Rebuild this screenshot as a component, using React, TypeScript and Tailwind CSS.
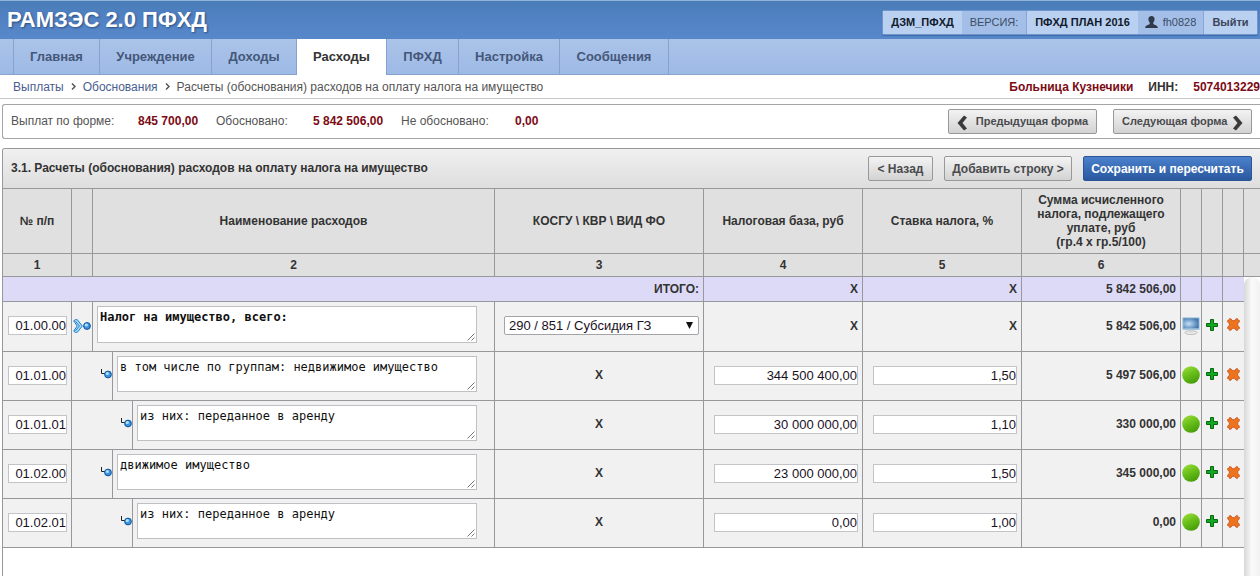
import React from "react";

const NAV = [
  { label: "Главная", width: "w-[86px]" },
  { label: "Учреждение", width: "w-[112px]" },
  { label: "Доходы", width: "w-[85px]" },
  { label: "Расходы", width: "w-[90px]", active: true },
  { label: "ПФХД", width: "w-[72px]" },
  { label: "Настройка", width: "w-[101px]" },
  { label: "Сообщения", width: "w-[109px]" },
];

type Row = {
  code: string;
  level: 0 | 1 | 2;
  name: string;
  base?: string;
  rate?: string;
  sum: string;
};

const ROWS: Row[] = [
  { code: "01.00.00", level: 0, name: "Налог на имущество, всего:", sum: "5 842 506,00" },
  { code: "01.01.00", level: 1, name: "в том числе по группам: недвижимое имущество", base: "344 500 400,00", rate: "1,50", sum: "5 497 506,00" },
  { code: "01.01.01", level: 2, name: "из них: переданное в аренду", base: "30 000 000,00", rate: "1,10", sum: "330 000,00" },
  { code: "01.02.00", level: 1, name: "движимое имущество", base: "23 000 000,00", rate: "1,50", sum: "345 000,00" },
  { code: "01.02.01", level: 2, name: "из них: переданное в аренду", base: "0,00", rate: "1,00", sum: "0,00" },
];

const LINE = "border-r border-b border-[#98989c]";
const CELL = "border-r border-b border-[#98989c] pb-[2px]";
const FIELD = "block h-[19px] w-full border border-[#c4c4c8] bg-white text-right text-[13px] leading-[17px] font-normal text-[#1a1024] outline-none";
const GREY_BUTTON =
  "flex h-[25px] items-center rounded-[2px] border border-[#98989a] bg-linear-to-b from-[#f3f3f3] to-[#d3d3d3] font-bold whitespace-nowrap text-[#4a4a4e]";

function Chevron() {
  return (
    <svg width="5" height="7" viewBox="0 0 5 7" aria-hidden="true">
      <path d="M1 0.5 4 3.5 1 6.5" fill="none" stroke="#555" strokeWidth="1.5" />
    </svg>
  );
}

function Arrow({ right }: { right?: boolean }) {
  return (
    <svg width="11" height="16" viewBox="0 0 11 16" className="mt-[2px]" aria-hidden="true">
      {right ? (
        <path d="M1 2.5 4 0.5 10.5 8 4 15.5 1 13.5 5.500 8Z" fill="#3a3a3c" />
      ) : (
        <path d="M10 2.500 7 0.5 0.5 8 7 15.5 10 13.500 5.500 8Z" fill="#3a3a3c" />
      )}
    </svg>
  );
}

function UserIcon() {
  return (
    <svg width="13" height="12" viewBox="0 0 13 12" aria-hidden="true">
      <path d="M6.5 0C8.600 0 9.700 1.300 9.600 3.200 9.500 4.900 8.800 5.900 8.300 6.600V8C9.500 9 12.700 9 12.900 12H.1C.3 9 3.500 9 4.700 8V6.600C4.200 5.900 3.500 4.900 3.400 3.200 3.300 1.300 4.400 0 6.500 0Z" fill="#303a4a" />
    </svg>
  );
}

function ExpandIcon() {
  return (
    <svg width="18" height="14" viewBox="0 0 18 14" className="block shrink-0" aria-hidden="true">
      <path d="M.700 1.800 2.300.700H4.300L9.300 7 4.300 13.300H2.300L.700 12.200 4.200 7Z" fill="#a9dcf8" stroke="#1d7cc8" />
      <path d="M2.500 2.300 6.500 7 2.500 11.700" fill="none" stroke="#2a88d0" />
      <circle cx="14" cy="7" r="3.400" fill="#3b95dc" stroke="#0f559f" />
      <circle cx="13.300" cy="6" r="1.600" fill="#b6e0fa" />
    </svg>
  );
}

function BranchIcon() {
  return (
    <svg width="12" height="11" viewBox="0 0 12 11" className="block" aria-hidden="true">
      <path d="M1.500 1V5.500H5" fill="none" stroke="#222" />
      <circle cx="8" cy="6.500" r="3.400" fill="#3b95dc" stroke="#0f559f" />
      <circle cx="7.300" cy="5.500" r="1.600" fill="#b6e0fa" />
    </svg>
  );
}

function MonitorIcon() {
  return (
    <svg width="18" height="18" viewBox="0 0 18 18" aria-hidden="true">
      <defs>
        <radialGradient id="screen" cx=".35" cy=".55" r=".65">
          <stop offset="0" stopColor="#c4e0f4" />
          <stop offset="1" stopColor="#4379b0" />
        </radialGradient>
      </defs>
      <rect x=".3" y=".3" width="17.400" height="12.700" rx="1" fill="#a9c6de" />
      <rect x="1.300" y="1.300" width="15.400" height="10" fill="url(#screen)" />
      <ellipse cx="9" cy="15.600" rx="6" ry="1.900" fill="#eee" stroke="#b4b4b4" strokeWidth=".9" />
      <path d="M6.500 13H11.500V15.500H6.500Z" fill="#d4d4d4" />
    </svg>
  );
}

function BallIcon() {
  return (
    <svg width="18" height="18" viewBox="0 0 18 18" aria-hidden="true">
      <defs>
        <linearGradient id="ball" x1=".2" y1="0" x2=".7" y2="1">
          <stop offset="0" stopColor="#9bdc38" />
          <stop offset=".5" stopColor="#66bd18" />
          <stop offset="1" stopColor="#449a08" />
        </linearGradient>
      </defs>
      <circle cx="9" cy="9" r="8.800" fill="url(#ball)" />
    </svg>
  );
}

function PlusIcon() {
  return (
    <svg width="12" height="12" viewBox="0 0 12 12" aria-hidden="true">
      <path d="M4.500.5H7.500V4.500H11.500V7.500H7.500V11.500H4.500V7.500H.5V4.500H4.500Z" fill="#12a822" stroke="#07680f" />
    </svg>
  );
}

function DeleteIcon() {
  return (
    <svg width="13" height="13" viewBox="0 0 13 13" aria-hidden="true">
      <path
        d="M2.600 .5 4.200 1 5.300 2.600H7.700L8.800 1 10.400 .5 10.900 2 12.500 2.600 12.100 4.300 10.700 5.400V7.600L12.100 8.700 12.500 10.400 10.900 11 10.400 12.500 8.800 12 7.700 10.400H5.300L4.200 12 2.600 12.500 2.100 11 .5 10.400 .9 8.700 2.300 7.600V5.400L.9 4.300 .5 2.600 2.100 2Z"
        fill="#ec741f"
        stroke="#cc5218"
        strokeWidth=".8"
      />
    </svg>
  );
}

function GripIcon() {
  return (
    <svg width="8" height="8" viewBox="0 0 8 8" className="pointer-events-none absolute right-[2px] bottom-[2px]" aria-hidden="true">
      <path d="M0.500 7.500 7.500.5M4.500 7.500 7.500 4.500" stroke="#666" strokeWidth=".9" />
    </svg>
  );
}

function ExpenseRow({ row }: { row: Row }) {
  const top = row.level === 0;
  const indentSpan = row.level + 1;
  const nameSpan = 3 - row.level;
  return (
    <tr className={top ? "h-[50px]" : "h-[49px]"}>
      <td className={`${CELL} pr-[4px] pl-[5px]`}>
        <input aria-label="№ п/п" defaultValue={row.code} className={FIELD} />
      </td>
      <td colSpan={indentSpan} className={CELL}>
        <div className={top ? "flex justify-center" : "flex justify-end pb-[4px]"}>{top ? <ExpandIcon /> : <BranchIcon />}</div>
      </td>
      <td colSpan={nameSpan} className={`${CELL} pt-[4px] pr-[17px] pl-[4px] align-top`}>
        <div className="relative">
          <textarea
            aria-label="Наименование расходов"
            defaultValue={row.name}
            className={`block w-full resize-none overflow-hidden border border-[#c0c0c4] bg-white px-[2px] pt-[2px] font-['DejaVu_Sans_Mono',monospace] text-xs leading-4 text-[#101010] outline-none ${top ? "h-[37px] font-bold" : "h-[36px]"}`}
          />
          <GripIcon />
        </div>
      </td>
      <td className={`${CELL} text-center font-bold`}>
        {top ? (
          <div className="relative mr-[4px] ml-[9px]">
            <select aria-label="КОСГУ \ КВР \ ВИД ФО" className="block h-[19px] w-full appearance-none rounded-[2px] border border-[#a4a4a8] bg-white pl-[4px] text-[13px] leading-[17px] font-normal text-[#1a1024]">
              <option>290 / 851 / Субсидия ГЗ</option>
            </select>
            <svg width="7" height="7" viewBox="0 0 7 7" className="pointer-events-none absolute top-[6px] right-[6px]" aria-hidden="true">
              <path d="M0 0H7L3.500 7Z" fill="#111" />
            </svg>
          </div>
        ) : (
          "X"
        )}
      </td>
      <td className={`${CELL} pr-[4px] pl-[10px] text-right font-bold`}>
        {row.base ? <input aria-label="Налоговая база, руб" defaultValue={row.base} className={FIELD} /> : "X"}
      </td>
      <td className={`${CELL} pr-[4px] pl-[10px] text-right font-bold`}>
        {row.rate ? <input aria-label="Ставка налога, %" defaultValue={row.rate} className={FIELD} /> : "X"}
      </td>
      <td className={`${CELL} pr-[4px] text-right font-bold`}>{row.sum}</td>
      <td className={CELL}>
        <div className="flex justify-center">{top ? <MonitorIcon /> : <BallIcon />}</div>
      </td>
      <td className={CELL}>
        <button aria-label="Добавить" className="flex w-full justify-center pb-[2px]">
          <PlusIcon />
        </button>
      </td>
      <td className="border-b border-[#98989c] pb-[2px]">
        <button aria-label="Удалить" className="flex w-full justify-center pb-[2px]">
          <DeleteIcon />
        </button>
      </td>
    </tr>
  );
}

export default function App() {
  return (
    <div className="min-h-screen overflow-hidden bg-white font-['Liberation_Sans',Arial,sans-serif] text-xs text-[#333]">
      <header className="flex h-[39px] items-center justify-between border-t border-[#8fb4d8] bg-linear-to-b from-[#4a7cb8] via-[#5282c4] to-[#5788ca] pr-[2px] pl-[7px]">
        <h1 className="text-[22px] leading-none font-bold text-white [text-shadow:1px_1px_2px_#2c4f80]">РАМЗЭС 2.0 ПФХД</h1>
        <div className="mt-[4px] flex h-[25px] items-stretch rounded-[2px] border border-[#6f96cc] bg-[#a3bfe8] text-[11px] text-[#3c4c66] shadow-[0_1px_1px_#3f6ba8]">
          <strong className="flex w-[79px] items-center justify-center bg-[#b9d0f1] text-[#111a2a]">ДЗМ_ПФХД</strong>
          <span className="flex w-[65px] items-center justify-center border-r border-[#86a6d6]">ВЕРСИЯ:</span>
          <strong className="flex w-[111px] items-center justify-center bg-[#b9d0f1] text-[#111a2a]">ПФХД ПЛАН 2016</strong>
          <span className="flex w-[66px] items-center justify-center gap-[5px] border-r border-[#86a6d6]">
            <UserIcon />
            fh0828
          </span>
          <button className="w-[53px] bg-[#b9d0f1] font-bold text-[#3c4658]">Выйти</button>
        </div>
      </header>

      <nav className="flex h-[36px] border-b border-[#8ba6cc] bg-linear-to-b from-[#abc3e8] to-[#9dbae6] pl-[13px]">
        <div className="-mb-px flex border-l border-[#86a2cf]">
          {NAV.map((item) => (
            <a
              key={item.label}
              href="#"
              className={`flex items-center justify-center border-r border-[#86a2cf] text-[13px] font-bold ${item.width} ${item.active ? "bg-white text-[#333]" : "border-b text-[#44577a]"}`}
            >
              {item.label}
            </a>
          ))}
        </div>
      </nav>

      <div className="flex h-[24px] items-center justify-between border-b border-[#c6c6c6] pl-[13px]">
        <div className="flex items-center gap-[7px] text-[#555]">
          <a href="#" className="text-[#4a5e90]">Выплаты</a>
          <Chevron />
          <a href="#" className="text-[#4a5e90]">Обоснования</a>
          <Chevron />
          <span>Расчеты (обоснования) расходов на оплату налога на имущество</span>
        </div>
        <div className="flex gap-[15px] font-bold">
          <span className="text-[#7c0a14]">Больница Кузнечики</span>
          <span>ИНН:</span>
          <span className="text-[#7c0a14]">5074013229</span>
        </div>
      </div>

      <section className="mt-[5px] ml-[2px] flex h-[35px] items-center justify-between rounded-l-[3px] border border-r-0 border-[#a4a4a6] pr-[8px] pl-[8px]">
        <dl className="flex pb-[2px] text-[#555]">
          <dt className="w-[127px]">Выплат по форме:</dt>
          <dd className="w-[78px] font-bold text-[#7c0a14]">845 700,00</dd>
          <dt className="w-[97px]">Обосновано:</dt>
          <dd className="w-[88px] font-bold text-[#7c0a14]">5 842 506,00</dd>
          <dt className="w-[114px]">Не обосновано:</dt>
          <dd className="font-bold text-[#7c0a14]">0,00</dd>
        </dl>
        <div className="flex gap-[16px] text-[11px]">
          <button className={`${GREY_BUTTON} w-[149px] justify-between px-[8px]`}>
            <Arrow />
            Предыдущая форма
          </button>
          <button className={`${GREY_BUTTON} w-[139px] justify-between px-[8px]`}>
            Следующая форма
            <Arrow right />
          </button>
        </div>
      </section>

      <section className="mt-[9px] ml-[2px] overflow-hidden rounded-tl-[3px] border-t border-l border-[#98989c]">
        <div className="flex h-[40px] items-center justify-between border-b border-[#98989c] bg-linear-to-b from-[#f0f0f0] to-[#dedede] pr-[8px] pl-[8px]">
          <h2 className="pb-[2px] font-bold">3.1. Расчеты (обоснования) расходов на оплату налога на имущество</h2>
          <div className="flex gap-[11px]">
            <button className={`${GREY_BUTTON} w-[65px] justify-center`}>&lt; Назад</button>
            <button className={`${GREY_BUTTON} w-[128px] justify-center`}>Добавить строку &gt;</button>
            <button className="h-[25px] w-[169px] rounded-[2px] border border-[#2b5595] bg-linear-to-b from-[#4b81cc] to-[#29589f] font-bold whitespace-nowrap text-white">
              Сохранить и пересчитать
            </button>
          </div>
        </div>

        <table className="w-full table-fixed border-separate border-spacing-0 leading-[14px]">
          <colgroup>
            <col className="w-[69px]" />
            <col className="w-[21px]" />
            <col className="w-[20px]" />
            <col className="w-[20px]" />
            <col />
            <col className="w-[209px]" />
            <col className="w-[159px]" />
            <col className="w-[159px]" />
            <col className="w-[159px]" />
            <col className="w-[21px]" />
            <col className="w-[21px]" />
            <col className="w-[21px]" />
            <col className="w-[16px]" />
          </colgroup>
          <thead className="bg-[#e0e0e0]">
            <tr className="h-[65px]">
              <th className={LINE}>№ п/п</th>
              <th className={LINE} />
              <th colSpan={3} className={LINE}>Наименование расходов</th>
              <th className={LINE}>КОСГУ \ КВР \ ВИД ФО</th>
              <th className={LINE}>Налоговая база, руб</th>
              <th className={LINE}>Ставка налога, %</th>
              <th className={LINE}>
                Сумма исчисленного
                <br />
                налога, подлежащего
                <br />
                уплате, руб
                <br />
                (гр.4 х гр.5/100)
              </th>
              <th className={LINE} />
              <th className={LINE} />
              <th className={LINE} />
              <th className="border-b border-[#98989c]" />
            </tr>
            <tr className="h-[23px]">
              <th className={LINE}>1</th>
              <th className={LINE} />
              <th colSpan={3} className={LINE}>2</th>
              <th className={LINE}>3</th>
              <th className={LINE}>4</th>
              <th className={LINE}>5</th>
              <th className={LINE}>6</th>
              <th className={LINE} />
              <th className={LINE} />
              <th className={LINE} />
              <th className="border-b border-[#98989c]" />
            </tr>
          </thead>
          <tbody className="bg-[#f1f1f2]">
            <tr className="h-[25px] bg-[#dddaf8] text-right font-bold">
              <td colSpan={6} className={`${LINE} pr-[4px]`}>ИТОГО:</td>
              <td className={`${LINE} pr-[4px]`}>X</td>
              <td className={`${LINE} pr-[4px]`}>X</td>
              <td className={`${LINE} pr-[4px]`}>5 842 506,00</td>
              <td className={LINE} />
              <td className={LINE} />
              <td className="border-b border-[#98989c]" />
              <td rowSpan={7} className="bg-white p-0">
                <div className="h-[299px] rounded-t-[8px] bg-linear-to-r from-[#d8d8d8] via-[#fafafa] to-[#f1f1f1]" />
              </td>
            </tr>
            {ROWS.map((row) => (
              <ExpenseRow key={row.code} row={row} />
            ))}
            <tr className="h-[28px] bg-white">
              <td colSpan={12} />
            </tr>
          </tbody>
        </table>
      </section>
    </div>
  );
}
